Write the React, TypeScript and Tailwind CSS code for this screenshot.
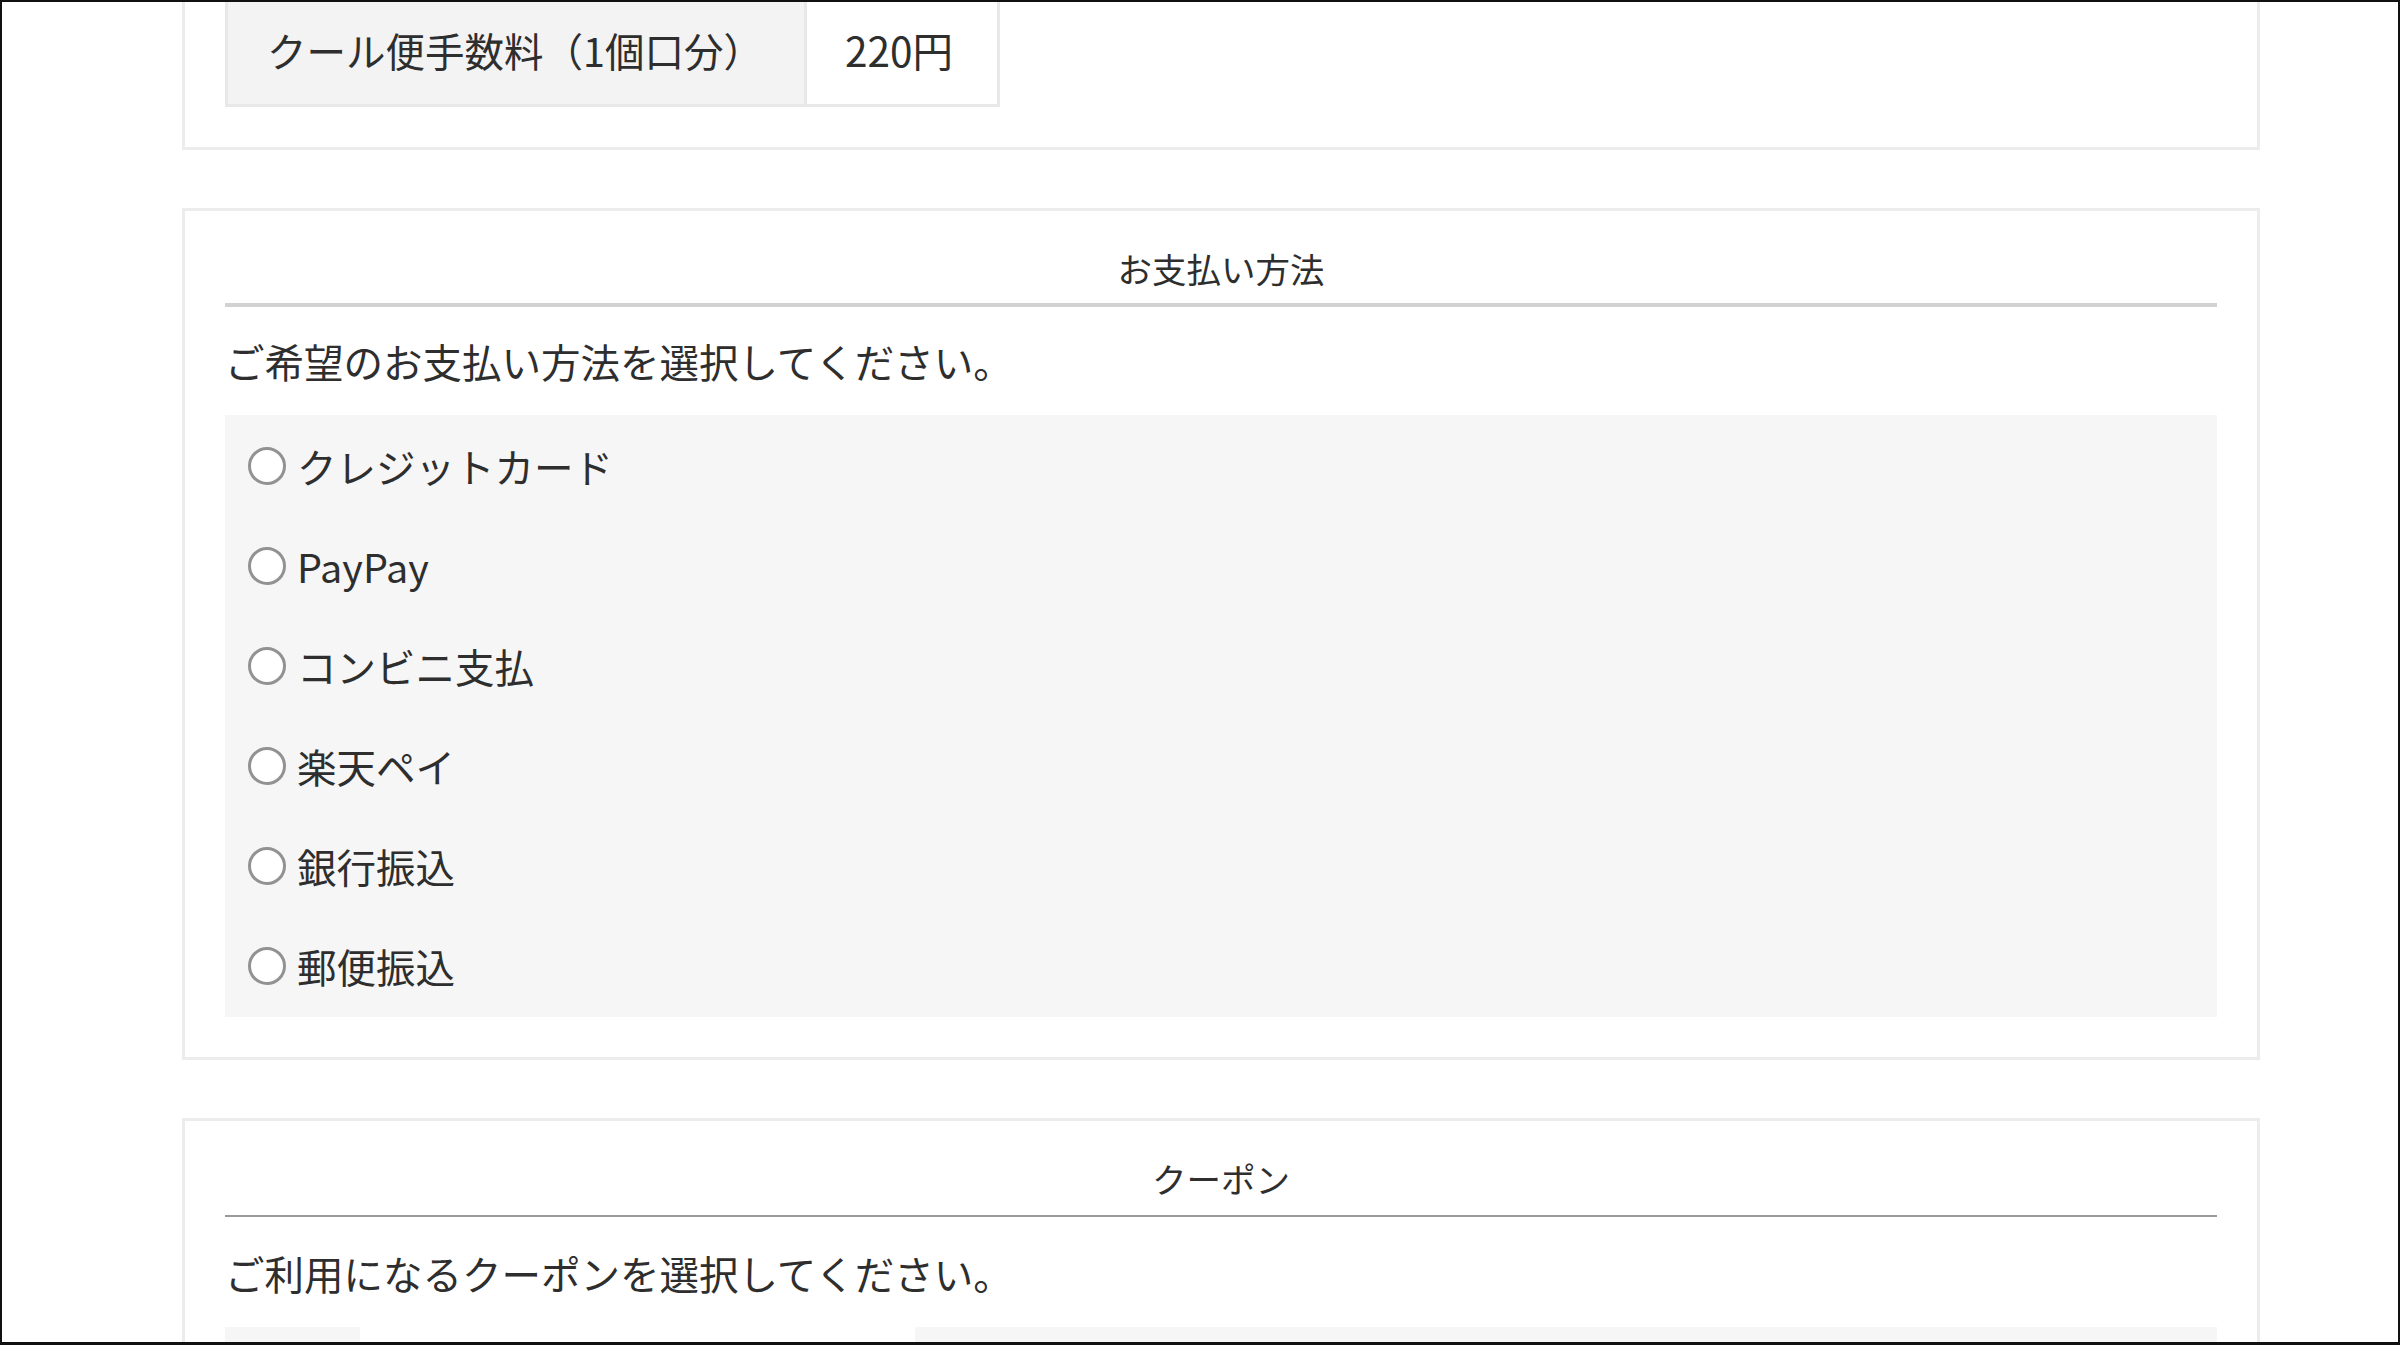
import React from "react";

const payments = ["クレジットカード", "PayPay", "コンビニ支払", "楽天ペイ", "銀行振込", "郵便振込"];

function Radio() {
  return (
    <span className="block w-[38px] h-[38px] shrink-0 rounded-full border-[3px] border-[#929292] bg-white" />
  );
}

export default function App() {
  return (
    <div className="h-[1345px] w-[2400px] overflow-hidden border-t-2 border-l-2 border-r-2 border-b-[3px] border-[#111] bg-white font-['Noto_Sans_CJK_JP','Noto_Sans',sans-serif] text-[#2e2e2e]">
      <div className="-mt-[52px] flex flex-col">
        {/* delivery fee card */}
        <section className="ml-[180px] w-[2078px] border-[3px] border-[#ececec] p-10">
          <div className="flex w-fit border-[3px] border-[#e8e8e8]">
            <div className="flex h-[108px] w-[576px] items-center bg-[#f3f3f3] pl-[39px] text-[39.5px] leading-none">
              クール便手数料（1個口分）
            </div>
            <div className="flex h-[108px] items-center border-l-[3px] border-[#e8e8e8] pl-[38px] pr-[44px] text-[40.5px] leading-none">
              220円
            </div>
          </div>
        </section>

        {/* payment method card */}
        <section className="ml-[180px] mt-[58px] w-[2078px] border-[3px] border-[#ececec] p-10">
          <h2 className="border-b-4 border-[#d2d2d2] pb-[18px] text-center text-[34.5px] font-normal leading-[34px]">
            お支払い方法
          </h2>
          <p className="mt-[26px] text-[39.5px] leading-[56px]">ご希望のお支払い方法を選択してください。</p>
          <div className="mt-[26px] flex flex-col bg-[#f6f6f6] py-px">
            {payments.map((name) => (
              <label key={name} className="flex h-[100px] items-center gap-[11px] pl-[23px] text-[39.5px] leading-none">
                <Radio />
                <span>{name}</span>
              </label>
            ))}
          </div>
        </section>

        {/* coupon card */}
        <section className="ml-[180px] mt-[58px] w-[2078px] border-[3px] border-[#ececec] p-10">
          <h2 className="border-b-2 border-[#9a9a9a] pb-[20px] text-center text-[34.5px] font-normal leading-[34px]">
            クーポン
          </h2>
          <p className="mt-[28px] text-[39.5px] leading-[56px]">ご利用になるクーポンを選択してください。</p>
          <div className="mt-[26px] flex h-[120px]">
            <div className="w-[135px] bg-[#f6f6f6]" />
            <div className="ml-[555px] flex-1 bg-[#f6f6f6]" />
          </div>
        </section>
      </div>
    </div>
  );
}
